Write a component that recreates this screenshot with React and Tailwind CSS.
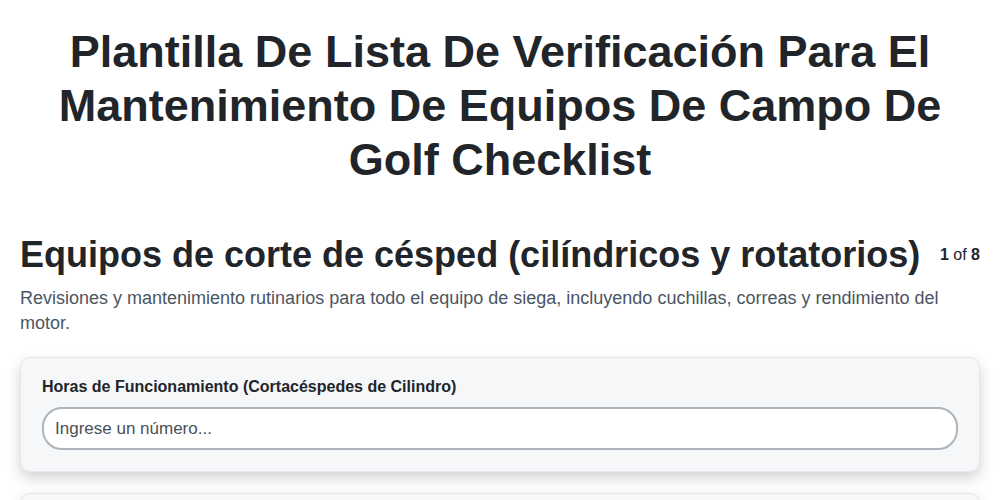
export default function App() {
  return (
    <div
      className="min-h-screen bg-white text-[#212529]"
      style={{ fontFamily: '"Liberation Sans", Arial, sans-serif' }}
    >
      <div className="px-5 pt-[25px]">
        <h1 className="text-center text-[45px] font-bold leading-[54px]">
          Plantilla De Lista De Verificación Para El Mantenimiento De Equipos De Campo De Golf Checklist
        </h1>

        <div className="mt-[46px] flex items-center justify-between gap-4">
          <h2 className="text-[36px] font-bold leading-[44px]">
            Equipos de corte de césped (cilíndricos y rotatorios)
          </h2>
          <div className="shrink-0 text-[16px]">
            <span className="font-bold">1</span> of <span className="font-bold">8</span>
          </div>
        </div>
        <p className="mt-[9px] text-[18px] leading-[25px] text-[#4b5563]">
          Revisiones y mantenimiento rutinarios para todo el equipo de siega, incluyendo cuchillas, correas y rendimiento del motor.
        </p>

        <div className="mt-[21px] flex flex-col gap-[21px]">
          <div className="rounded-[10px] border border-[#e5e7eb] bg-[#f6f7f9] px-[21px] pb-[21px] pt-[19px] shadow-[0_6px_14px_rgba(0,0,0,0.18)]">
            <label className="block text-[16px] font-bold leading-5">
              Horas de Funcionamiento (Cortacéspedes de Cilindro)
            </label>
            <input
              type="text"
              placeholder="Ingrese un número..."
              className="mt-[10px] h-[43px] w-full rounded-[20px] border-2 border-[#adb3ba] bg-white px-[11px] text-[17px] placeholder:text-[#495057] outline-none"
            />
          </div>
          <div className="h-[80px] rounded-[10px] border border-[#e5e7eb] bg-[#f6f7f9] shadow-[0_6px_14px_rgba(0,0,0,0.18)]" />
        </div>
      </div>
    </div>
  );
}
